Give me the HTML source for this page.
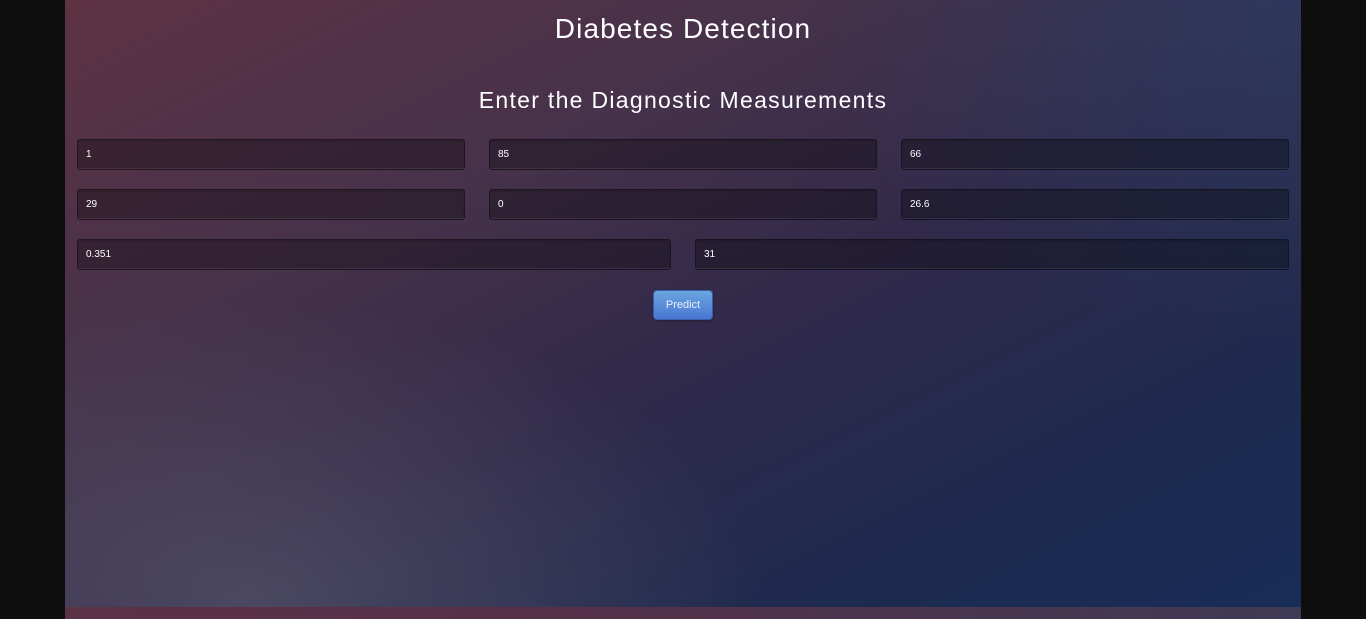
<!DOCTYPE html>
<html><head><meta charset="utf-8"><style>
html,body{margin:0;padding:0;width:1366px;height:619px;background:#0e0e0e;overflow:hidden;font-family:"Liberation Sans",sans-serif}
.page{position:absolute;left:65px;top:0;width:1236px;height:607px;
background:
radial-gradient(ellipse 520px 300px at 180px 600px, rgba(110,110,125,0.45), rgba(110,110,125,0) 100%),
radial-gradient(ellipse 500px 350px at 1236px 0px, rgba(40,70,110,0.5), rgba(40,70,110,0) 100%),
linear-gradient(to bottom right,#5e3344 0%,#47324a 30%,#30294a 55%,#1e2a4e 80%,#182d58 100%);}
.strip{position:absolute;left:65px;top:607px;width:1236px;height:12px;background:linear-gradient(to right,#5b3346,#553049 40%,#3f3a55 100%)}
h1{position:absolute;top:13px;left:0;width:100%;margin:0;text-align:center;color:#fff;font-weight:normal;font-size:28px;letter-spacing:1.1px}
h2{position:absolute;top:87px;left:0;width:100%;margin:0;text-align:center;color:#fff;font-weight:normal;font-size:23px;letter-spacing:1.3px}
.in{position:absolute;height:31px;box-sizing:border-box;background:rgba(0,0,0,0.3);border:1px solid rgba(0,0,0,0.35);border-radius:3px;box-shadow:inset 0 -1px 0 rgba(255,255,255,0.08),inset 0 1px 2px rgba(0,0,0,0.2);color:#fff;font-size:10px;padding:9px 8px;line-height:11px}
.btn{position:absolute;left:588px;top:290px;width:60px;height:30px;box-sizing:border-box;border-radius:4px;background:linear-gradient(#6aa6e0,#4a76d2);border:1px solid #3a5ea8;color:#e8eefa;font-size:11px;text-align:center;line-height:28px;box-shadow:0 1px 2px rgba(0,0,0,0.3)}
</style></head><body>
<div class="page">
<h1>Diabetes Detection</h1>
<h2>Enter the Diagnostic Measurements</h2>
<div class="in" style="left:12px;top:139px;width:388px">1</div>
<div class="in" style="left:424px;top:139px;width:388px">85</div>
<div class="in" style="left:836px;top:139px;width:388px">66</div>
<div class="in" style="left:12px;top:189px;width:388px">29</div>
<div class="in" style="left:424px;top:189px;width:388px">0</div>
<div class="in" style="left:836px;top:189px;width:388px">26.6</div>
<div class="in" style="left:12px;top:239px;width:594px">0.351</div>
<div class="in" style="left:630px;top:239px;width:594px">31</div>
<div class="btn">Predict</div>
</div>
<div class="strip"></div>
</body></html>
